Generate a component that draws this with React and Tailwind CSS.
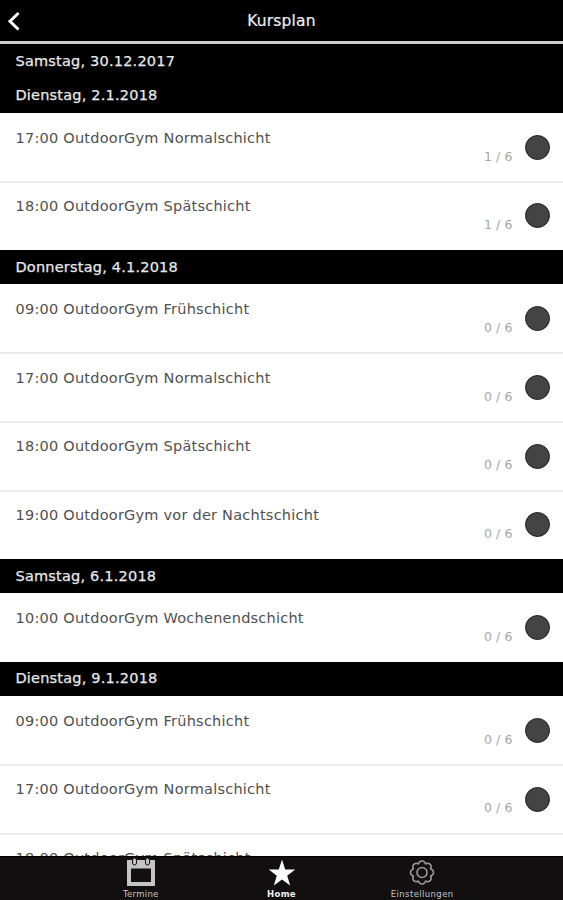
const sections = [
  { day: "Samstag, 30.12.2017", courses: [] },
  {
    day: "Dienstag, 2.1.2018",
    courses: [
      ["17:00 OutdoorGym Normalschicht", "1 / 6"],
      ["18:00 OutdoorGym Spätschicht", "1 / 6"],
    ],
  },
  {
    day: "Donnerstag, 4.1.2018",
    courses: [
      ["09:00 OutdoorGym Frühschicht", "0 / 6"],
      ["17:00 OutdoorGym Normalschicht", "0 / 6"],
      ["18:00 OutdoorGym Spätschicht", "0 / 6"],
      ["19:00 OutdoorGym vor der Nachtschicht", "0 / 6"],
    ],
  },
  { day: "Samstag, 6.1.2018", courses: [["10:00 OutdoorGym Wochenendschicht", "0 / 6"]] },
  {
    day: "Dienstag, 9.1.2018",
    courses: [
      ["09:00 OutdoorGym Frühschicht", "0 / 6"],
      ["17:00 OutdoorGym Normalschicht", "0 / 6"],
      ["18:00 OutdoorGym Spätschicht"],
    ],
  },
];

function Course({ title, places, first }) {
  return (
    <div
      className={`flex justify-between border-t-2 pr-[13px] pl-[15.5px] ${first ? "h-[68.6px] border-transparent" : "-mt-[0.6px] h-[69.2px] border-[#ededed] pt-[0.5px]"}`}
    >
      <span className="mt-[13px] text-[14.5px] leading-5 tracking-[0.23px] whitespace-nowrap text-[#505050]">{title}</span>
      {places && (
        <div className="flex">
          <span className="mt-[33px] mr-[12.500px] text-[12.5px] leading-[18px] tracking-[0.1px] whitespace-nowrap text-[#a6a6a6]">{places}</span>
          <span className="mt-[20.1px] size-[25px] rounded-full border-[1.5px] border-[#222] bg-[#444]" />
        </div>
      )}
    </div>
  );
}

function Day({ day, courses }) {
  return (
    <section>
      <h2 className="flex h-[34.3px] items-center bg-black pt-px pl-[15.5px] text-[14.5px] tracking-[0.2px] text-[#e8e8e8] [-webkit-text-stroke:0.25px_#e8e8e8]">{day}</h2>
      {courses.map(([title, places], i) => (
        <Course key={title} title={title} places={places} first={i === 0} />
      ))}
    </section>
  );
}

function Tab({ label, className, children }) {
  return (
    <div className={`flex w-[140.7px] flex-col items-center ${className}`}>
      {children}
      <span className="text-[8.500px] leading-[10px] whitespace-nowrap">{label}</span>
    </div>
  );
}

// Scalloped outline of the settings gear, eight lobes.
const gear =
  "M" +
  Array.from({ length: 120 }, (_, i) => {
    const a = (i * Math.PI) / 60;
    const r = 8.7 + 2.8 * Math.pow(Math.abs(Math.cos(a * 4)), 0.6);
    return `${(15 + r * Math.cos(a)).toFixed(2)} ${(14.5 + r * Math.sin(a)).toFixed(2)}`;
  }).join("L") +
  "Z";

export default function App() {
  return (
    <div className="flex h-[900px] w-[563px] flex-col overflow-hidden bg-white font-['DejaVu_Sans',sans-serif]">
      <header className="grid h-[44.3px] shrink-0 grid-cols-[1fr_auto_1fr] items-center border-b-[3px] border-[#cfcfcf] bg-black">
        <svg className="ml-[7px] size-5" viewBox="0 0 20 20" fill="none" stroke="#fff" strokeWidth="3">
          <path d="M11.5 2 L3 10.3 L11.5 18.5" />
        </svg>
        <h1 className="pt-0.5 text-[15.500px] tracking-[0.15px] text-[#eee] [-webkit-text-stroke:0.2px_#eee]">Kursplan</h1>
      </header>
      <main className="min-h-0 flex-1 overflow-hidden">
        {sections.map((s) => (
          <Day key={s.day} {...s} />
        ))}
      </main>
      <nav className="flex h-[44px] shrink-0 justify-center border-t border-black bg-[#120f10]">
        <Tab label="Termine" className="tracking-[0.3px] text-[#c4c4c4]">
          <svg className="mt-[1px] h-[31px] w-[30px]" viewBox="0 0 30 31">
            <path fill="#c4c4c4" fillRule="evenodd" d="M1 2H29V28H1ZM5 10.500V24H25V10.500Z" />
            <g fill="#c4c4c4" stroke="#120f10" strokeWidth="1">
              <rect x="6.500" y="0" width="4" height="7" rx="2" />
              <rect x="19.500" y="0" width="4" height="7" rx="2" />
            </g>
          </svg>
        </Tab>
        <Tab label="Home" className="font-bold tracking-[0.3px] text-[#f0f0f0]">
          <svg className="mt-[1px] h-[31px] w-[30px]" viewBox="0 0 30 31">
            <path fill="#fff" d="M15 1.500L18.200 11.500H28.200L20.200 17.700L23.200 27.500L15 21.500L6.800 27.500L9.800 17.700L1.800 11.500H11.800Z" />
          </svg>
        </Tab>
        <Tab label="Einstellungen" className="tracking-[0.4px] text-[#c4c4c4]">
          <svg className="mt-[1px] h-[31px] w-[30px]" viewBox="0 0 30 31" fill="none" stroke="#999" strokeWidth="1.600">
            <path d={gear} />
            <circle cx="15" cy="14.500" r="5" />
          </svg>
        </Tab>
      </nav>
    </div>
  );
}
